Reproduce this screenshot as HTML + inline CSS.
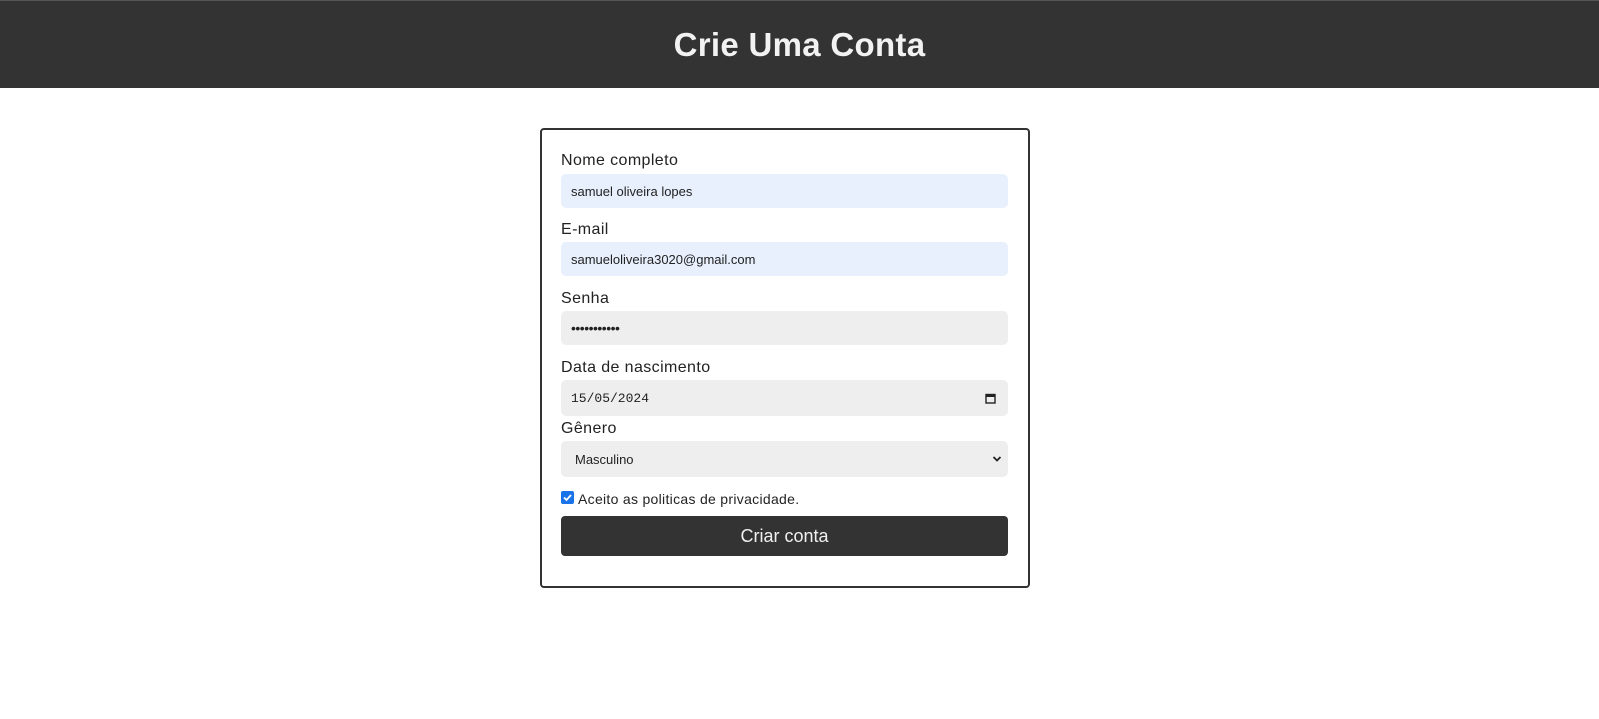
<!DOCTYPE html>
<html><head><meta charset="utf-8"><style>
body{margin:0;width:1599px;height:719px;background:#fff;font-family:"Liberation Sans",sans-serif;position:relative;overflow:hidden}
.hdr{position:absolute;left:0;top:0;width:1599px;height:88px;background:#333;border-top:1px solid #555;box-sizing:border-box}
.hdr h1{margin:0;text-align:center;color:#f2f2f2;font-size:33px;font-weight:bold;line-height:88px;letter-spacing:0.3px}
.card{position:absolute;left:540px;top:128px;width:490px;height:460px;border:2px solid #333;border-radius:4px;box-sizing:border-box}
.a{position:absolute;left:561px}
.lbl{font-size:16px;color:#222;line-height:20px;letter-spacing:0.4px}
.in{width:447px;border-radius:5px;font-size:13px;color:#222;box-sizing:border-box;padding-left:10px;display:flex;align-items:center}
.blue{background:#e8f0fe}.gray{background:#eee}
.btn{width:447px;height:40px;background:#333;border-radius:4px;color:#f0f0f0;font-size:18px;text-align:center;line-height:40px}
</style></head><body>
<div class="hdr"><h1>Crie Uma Conta</h1></div>
<div class="card"></div>
<div class="a lbl" style="top:151px">Nome completo</div>
<div class="a in blue" style="top:174px;height:34px">samuel oliveira lopes</div>
<div class="a lbl" style="top:220px">E-mail</div>
<div class="a in blue" style="top:242px;height:34px">samueloliveira3020@gmail.com</div>
<div class="a lbl" style="top:289px">Senha</div>
<div class="a in gray" style="top:311px;height:34px;font-size:14px;letter-spacing:-0.5px">•••••••••••</div>
<div class="a lbl" style="top:358px">Data de nascimento</div>
<div class="a in gray" style="top:380px;height:36px;font-family:'Liberation Mono',monospace;font-size:13px;justify-content:space-between;padding-right:12px">15/05/2024<svg width="11" height="11" viewBox="0 0 11 11"><rect x="1" y="1.5" width="9" height="8.5" fill="none" stroke="#222" stroke-width="1.4"/><rect x="1" y="1.5" width="9" height="2.5" fill="#222"/></svg></div>
<div class="a lbl" style="top:419px">Gênero</div>
<div class="a in gray" style="top:441px;height:36px;padding-left:14px;justify-content:space-between;padding-right:6px">Masculino<svg width="10" height="8" viewBox="0 0 10 8"><path d="M1.5 2l3.5 3.5L8.5 2" fill="none" stroke="#222" stroke-width="1.8"/></svg></div>
<div class="a" style="top:491px;width:13px;height:13px;background:#1a73e8;border-radius:2px"><svg width="13" height="13" viewBox="0 0 13 13"><path d="M3 6.5l2.5 2.5L10 4" fill="none" stroke="#fff" stroke-width="1.8"/></svg></div>
<div class="a lbl" style="left:578px;top:489px;font-size:14px;letter-spacing:0.3px">Aceito as politicas de privacidade.</div>
<div class="a btn" style="top:516px">Criar conta</div>
</body></html>
